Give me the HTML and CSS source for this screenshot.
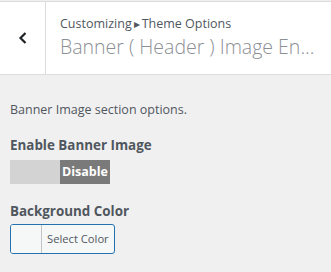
FILE: index.html
```html
<!DOCTYPE html>
<html lang="en">
<head>
<meta charset="UTF-8">
<title>Customizing Banner</title>
<link rel="stylesheet" href="styles.css">
</head>
<body>

<div class="head">
<button class="back" aria-label="Back">
<svg width="10" height="14" viewBox="0 0 10 14"><path d="M7.5 2 L2.5 7 L7.5 12" fill="none" stroke="#1d2327" stroke-width="2.2"/></svg>
</button>
<div class="titles">
<div class="crumb">Customizing<span class="sep">&#9656;</span>Theme Options</div>
<div class="title">Banner ( Header ) Image En...</div>
</div>
</div>

<div class="section">

<p class="desc">Banner Image section options.</p>

<div class="label">Enable Banner Image</div>
<div class="toggle">
<span class="off"></span>
<span class="on">Disable</span>
</div>

<div class="label second">Background Color</div>
<button class="color">
<span class="swatch"></span>
<span class="pick">Select Color</span>
</button>

</div>

</body>
</html>
```

FILE: styles.css
```css
body{
margin:0;
font-family:"Open Sans",Arial,sans-serif;
background:#f0f0f1;
color:#50575e;
}

.head{
display:flex;
height:72px;
margin-top:1px;
border-top:1px solid #dcdcde;
border-bottom:1px solid #dcdcde;
background:#fff;
}

.back{
width:46px;
border:none;
border-right:1px solid #dcdcde;
background:#fff;
display:flex;
align-items:center;
justify-content:center;
padding:0;
}

.titles{
flex:1;
min-width:0;
padding:13px 14px 0 14px;
}

.crumb{
font-size:12.5px;
line-height:18px;
color:#50575e;
}

.sep{
font-size:12px;
margin:0 2px;
}

.title{
font-size:19.5px;
font-weight:300;
line-height:28px;
color:#8c8f94;
white-space:nowrap;
}

.section{
padding:0 10px;
}

.desc{
margin:26px 0 0 0;
font-size:12.5px;
line-height:18px;
}

.label{
margin-top:16px;
font-size:13.4px;
font-weight:700;
line-height:20px;
}

.second{
margin-top:17px;
}

.toggle{
display:flex;
width:100px;
height:24px;
margin-top:5px;
}

.off{
width:50px;
background:#d3d3d3;
}

.on{
width:50px;
background:#7a7a7a;
color:#fff;
font-size:12.5px;
font-weight:700;
line-height:24px;
text-align:center;
}

.color{
display:flex;
height:30px;
margin-top:3px;
padding:0;
border:1px solid #2271b1;
border-radius:3px;
background:#f6f7f7;
overflow:hidden;
font-family:inherit;
}

.swatch{
width:30px;
height:100%;
border-right:1px solid #c3c4c7;
background:#f6f7f7;
}

.pick{
padding:0 5px 0 5px;
font-size:11.2px;
line-height:28px;
color:#50575e;
}
```
